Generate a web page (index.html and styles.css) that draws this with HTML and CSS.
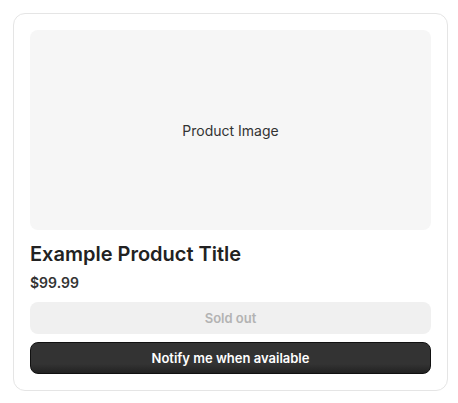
FILE: index.html
```html
<!DOCTYPE html>
<html lang="en">
<head>
<meta charset="utf-8">
<title>Product Card</title>
<link rel="stylesheet" href="styles.css">
</head>
<body>
  <div class="card">
    <div class="image">Product Image</div>
    <h2 class="title">Example Product Title</h2>
    <div class="price">$99.99</div>
    <div class="actions">
      <button class="btn btn-disabled" disabled>Sold out</button>
      <button class="btn btn-notify">Notify me when available</button>
    </div>
  </div>
</body>
</html>
```
FILE: styles.css
```css
html, body {
  margin: 0;
  padding: 0;
  background: #ffffff;
}
body {
  padding: 13px 0 0 13px;
  font-family: Inter, "Noto Sans", sans-serif;
  color: #222222;
}
.card {
  width: 435px;
  box-sizing: border-box;
  border: 1px solid #e5e5e5;
  border-radius: 12px;
  padding: 16px;
  display: flex;
  flex-direction: column;
}
.image {
  height: 200px;
  background: #f6f6f6;
  border-radius: 8px;
  display: flex;
  align-items: center;
  justify-content: center;
  font-size: 14px;
  color: #333333;
}
.title {
  margin: 10px 0 0;
  font-size: 20px;
  line-height: 28px;
  font-weight: 600;
  color: #222222;
}
.price {
  margin-top: 5px;
  font-size: 14px;
  line-height: 20px;
  font-weight: 600;
  color: #333333;
}
.actions {
  margin-top: 9px;
  display: flex;
  flex-direction: column;
  gap: 8px;
}
.btn {
  height: 32px;
  border-radius: 8px;
  font-family: Inter, "Noto Sans", sans-serif;
  font-size: 13px;
  font-weight: 600;
  display: flex;
  align-items: center;
  justify-content: center;
  padding: 0;
}
.btn-disabled {
  background: #f0f0f0;
  border: none;
  color: #b3b3b3;
}
.btn-notify {
  background: linear-gradient(#333333 0%, #333333 70%, #222222 100%);
  border: 1px solid #111111;
  color: #ffffff;
}
```
